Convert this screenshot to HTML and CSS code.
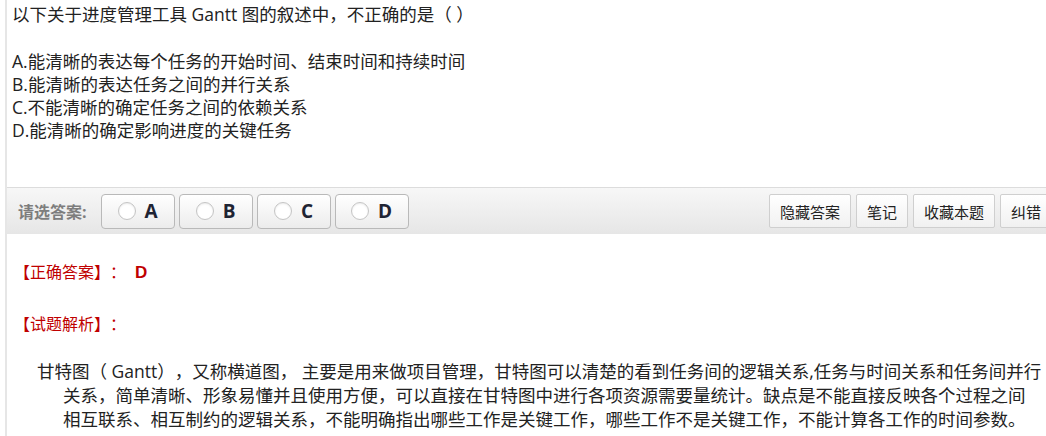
FILE: index.html
```html
<!DOCTYPE html>
<html lang="zh-CN">

<head>
    <meta charset="UTF-8">
    <meta name="viewport" content="width=device-width, initial-scale=1.0">
    <title>试题</title>
    <link rel="stylesheet" href="styles.css">
</head>

<body>
    <div class="page">
        <div class="question">
            <p class="stem">以下关于进度管理工具 Gantt 图的叙述中，不正确的是（ ）</p>
            <ul class="options">
                <li>A.能清晰的表达每个任务的开始时间、结束时间和持续时间</li>
                <li>B.能清晰的表达任务之间的并行关系</li>
                <li>C.不能清晰的确定任务之间的依赖关系</li>
                <li>D.能清晰的确定影响进度的关键任务</li>
            </ul>
        </div>

        <div class="toolbar">
            <span class="choose-label">请选答案:</span>
            <div class="choices">
                <button class="choice"><span class="radio"></span>A</button>
                <button class="choice"><span class="radio"></span>B</button>
                <button class="choice"><span class="radio"></span>C</button>
                <button class="choice"><span class="radio"></span>D</button>
            </div>
            <div class="actions">
                <button class="action">隐藏答案</button>
                <button class="action">笔记</button>
                <button class="action">收藏本题</button>
                <button class="action">纠错</button>
            </div>
        </div>

        <div class="answer">
            <p class="label">【正确答案】：<b class="right-answer">D</b></p>
            <p class="label analysis-title">【试题解析】：</p>
            <p class="analysis">甘特图（ Gantt），又称横道图， 主要是用来做项目管理，甘特图可以清楚的看到任务间的逻辑关系,任务与时间关系和任务间并行<br>关系，简单清晰、形象易懂并且使用方便，可以直接在甘特图中进行各项资源需要量统计。缺点是不能直接反映各个过程之间<br>相互联系、相互制约的逻辑关系，不能明确指出哪些工作是关键工作，哪些工作不是关键工作，不能计算各工作的时间参数。</p>
        </div>
    </div>
</body>

</html>
```

FILE: styles.css
```css
* {
    margin: 0;
    padding: 0;
    box-sizing: border-box;
}

body {
    font-family: "Open Sans", "Noto Sans CJK SC", sans-serif;
    color: #222;
    background: #fff;
    overflow: hidden;
    text-spacing-trim: space-all;
}

.page {
    margin-left: 5px;
    border-left: 2px solid #e6e6e6;
    min-height: 436px;
    overflow: hidden;
}

.question {
    padding: 3px 0 45px 5px;
    font-size: 17.5px;
    line-height: 23px;
}

.stem {
    margin-bottom: 24px;
}

.options {
    list-style: none;
}

/* answer bar */
.toolbar {
    width: 1045px;
    height: 47px;
    display: flex;
    align-items: center;
    padding: 0 0 0 11px;
    border-top: 1px solid #dcdcdc;
    background: linear-gradient(#f7f7f7, #e6e6e6);
}

.choose-label {
    font-size: 16px;
    font-weight: bold;
    color: #7d7d7d;
    margin-right: 14px;
}

.choices {
    display: flex;
    gap: 4px;
}

.choice {
    width: 74px;
    height: 35px;
    display: flex;
    align-items: center;
    justify-content: center;
    gap: 9px;
    font-family: "Open Sans", sans-serif;
    font-size: 19px;
    font-weight: bold;
    color: #1f2433;
    border: 1px solid #b9b9b9;
    border-radius: 4px;
    background: linear-gradient(#ffffff, #ececec);
}

.radio {
    width: 18px;
    height: 18px;
    border-radius: 50%;
    border: 1px solid #c4c4c4;
    background: #fff;
    box-shadow: inset 0 1px 2px rgba(0, 0, 0, 0.08);
}

.actions {
    display: flex;
    gap: 5px;
    margin-left: auto;
}

.action {
    height: 34px;
    padding: 0 10px;
    font-family: "Noto Sans CJK SC", sans-serif;
    font-size: 15px;
    color: #222;
    border: 1px solid #cfcfcf;
    border-radius: 2px;
    background: linear-gradient(#ffffff, #f1f1f1);
}

/* answer & analysis */
.answer {
    padding: 26px 0 0 7px;
}

.label {
    font-size: 16px;
    line-height: 24px;
    color: #c00000;
}

.right-answer {
    font-family: "Liberation Sans", sans-serif;
    font-size: 17px;
    margin-left: 9px;
}

.analysis-title {
    margin-top: 27px;
}

.analysis {
    margin-top: 23px;
    padding-left: 49px;
    text-indent: -26px;
    font-size: 17.5px;
    line-height: 24px;
    white-space: nowrap;
}
```
